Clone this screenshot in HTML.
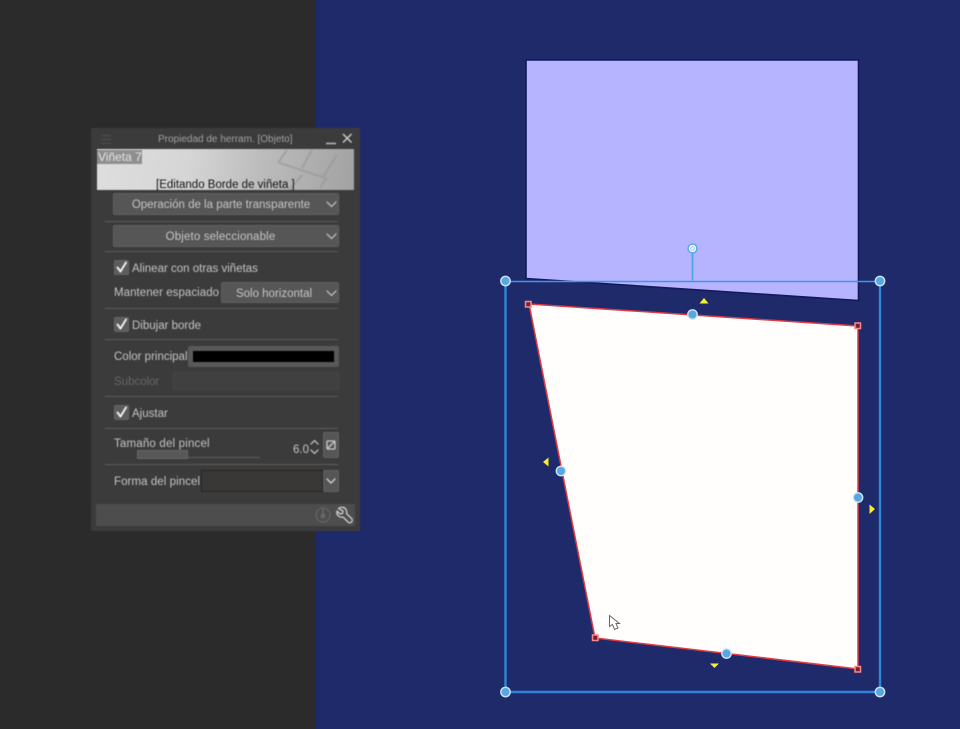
<!DOCTYPE html>
<html lang="es">
<head>
<meta charset="utf-8">
<title>Propiedad de herram.</title>
<style>
html,body{margin:0;padding:0;width:960px;height:729px;overflow:hidden;background:#2b2b2b;font-family:"Liberation Sans",sans-serif}
#bg{position:absolute;left:316px;top:0;width:644px;height:729px;background:#1f2a6b}
#canvas{position:absolute;left:0;top:0;filter:blur(.25px)}
#panel{position:absolute;left:91px;top:128px;width:269px;height:403px;background:#3c3b3c;filter:blur(.4px)}
#panel div{position:absolute;box-sizing:border-box}
.t{color:#c4c4c4;font-size:11.5px;line-height:14px;white-space:nowrap}
.btn{background:#565656;border:1px solid #606060;border-radius:2px;color:#c6c6c6;font-size:11.5px;line-height:19px;padding-top:2px;text-align:center;white-space:nowrap}
.sep{height:1px;left:14px;width:233px;background:#5c5c5c}
.cb{width:15px;height:15px;left:23px;background:#5c5c5c;border:1px solid #666;border-radius:2px}
svg{position:absolute;overflow:visible}
</style>
</head>
<body>
<div id="bg"></div>
<svg id="canvas" width="960" height="729" viewBox="0 0 960 729" style="left:0;top:0">
  <polygon points="526,60 858.500,60 858.500,300.500 526,278.500" fill="#b6b3ff" stroke="#14195a" stroke-width="1.600"/>
  <polygon points="529,304 858,326 858,669 595,638" fill="#fffefd" stroke="#e03a42" stroke-width="1.500"/>
  <line x1="505.500" y1="281.500" x2="880" y2="281.500" stroke="#3f96e6" stroke-width="1.500"/>
  <polyline points="505.500,281.500 505.500,692 880,692 880,281.500" fill="none" stroke="#2f86d8" stroke-width="2.400"/>
  <line x1="692.500" y1="250" x2="692.500" y2="281" stroke="#4fa5ea" stroke-width="1.700"/>
  <circle cx="692.500" cy="248.500" r="4.400" fill="#fff" stroke="#5aa8e6" stroke-width="1.500"/>
  <circle cx="692.500" cy="248.500" r="1.800" fill="#fff" stroke="#7ab6e8" stroke-width=".8"/>
  <g fill="#56a7e2" stroke="#cfe3f4" stroke-width="1.400">
    <circle cx="505.500" cy="281" r="4.700"/>
    <circle cx="880" cy="281" r="4.700"/>
    <circle cx="505.500" cy="692" r="4.700"/>
    <circle cx="880" cy="692" r="4.700"/>
    <circle cx="692.500" cy="314.500" r="4.700"/>
    <circle cx="561" cy="471" r="4.700"/>
    <circle cx="858" cy="497.500" r="4.700"/>
    <circle cx="726.500" cy="653.500" r="4.700"/>
  </g>
  <g fill="#7a2030" stroke="#f58a8a" stroke-width="1.500">
    <rect x="525.500" y="301.500" width="5.500" height="5.500"/>
    <rect x="855" y="323" width="5.500" height="5.500"/>
    <rect x="855" y="666.500" width="5.500" height="5.500"/>
    <rect x="592.500" y="635" width="5.500" height="5.500"/>
  </g>
  <g fill="#f6f02c">
    <polygon points="704,298 699.500,303.500 708.500,303.500"/>
    <polygon points="543,462 548.500,457.500 548.500,466.500"/>
    <polygon points="875,509 869.500,504.500 869.500,514"/>
    <polygon points="714.500,668 710,663.500 719,663.500"/>
  </g>
  <path d="M609.500 615.500 L609.500 626.500 L612.500 624.500 L614.500 629.500 L618 628 L616 623.500 L619.500 623.500 Z" fill="#fff" stroke="#666" stroke-width="1"/>
</svg>

<div id="panel">
  <svg style="left:0;top:0" width="269" height="403">
    <g stroke="#4f4f4f" stroke-width="1"><line x1="10" y1="7.500" x2="20" y2="7.500"/><line x1="10" y1="11.500" x2="20" y2="11.500"/><line x1="10" y1="15.500" x2="20" y2="15.500"/></g>
    <line x1="235" y1="15.500" x2="245" y2="15.500" stroke="#bbb" stroke-width="1.500"/>
    <path d="M252 6 L260.500 14.500 M260.500 6 L252 14.500" stroke="#c8c8c8" stroke-width="1.500" fill="none"/>
  </svg>
  <div class="t" style="left:67px;top:5px;color:#a0a0a0;font-size:10px">Propiedad de herram. [Objeto]</div>

  <div style="left:6px;top:21px;width:257px;height:41px;background:linear-gradient(100deg,#dedede 0%,#d6d6d6 35%,#bdbdbd 62%,#a2a2a2 100%);overflow:hidden">
    <svg style="left:0;top:0" width="257" height="41">
      <g stroke="#999" stroke-width="2.500" fill="none" opacity=".6">
        <path d="M181 14 L190 1"/><path d="M205 19 L215 1"/><path d="M226 28 L240 6"/>
        <path d="M183 14 L228 29"/><path d="M191 43 L205 26"/><path d="M223 39 L230 28"/>
      </g>
    </svg>
    <div class="t" style="left:0;top:1px;width:45px;height:14px;background:#8f8f8f;color:#e4e4e4;font-size:12px;line-height:14px;padding-left:1px">Viñeta 7</div>
    <div class="t" style="left:59px;top:29px;color:#111;line-height:14px">[Editando Borde de viñeta ]</div>
  </div>

  <div class="btn" style="left:22px;top:65px;width:226px;height:22px;padding-right:10px">Operación de la parte transparente</div>
  <div class="sep" style="top:93px"></div>
  <div class="btn" style="left:22px;top:97px;width:226px;height:22px;padding-right:11px;letter-spacing:.15px">Objeto seleccionable</div>
  <div class="sep" style="top:123px"></div>

  <div class="cb" style="top:132px"></div>
  <div class="t" style="left:41px;top:134px">Alinear con otras viñetas</div>
  <div class="t" style="left:23px;top:158px;letter-spacing:.05px">Mantener espaciado</div>
  <div class="btn" style="left:130px;top:154px;width:118px;height:21px;padding-right:12px">Solo horizontal</div>
  <div class="sep" style="top:180px"></div>

  <div class="cb" style="top:189px"></div>
  <div class="t" style="left:41px;top:191px">Dibujar borde</div>
  <div class="sep" style="top:211px"></div>

  <div class="t" style="left:23px;top:222px">Color principal</div>
  <div style="left:97px;top:218px;width:151px;height:21px;background:#000;border:5px solid #595959;border-radius:2px"></div>
  <div class="t" style="left:23px;top:247px;color:#666">Subcolor</div>
  <div style="left:82px;top:244px;width:166px;height:18px;background:#404040;border:1px solid #464646"></div>
  <div class="sep" style="top:268px"></div>

  <div class="cb" style="top:277px"></div>
  <div class="t" style="left:41px;top:279px">Ajustar</div>
  <div class="sep" style="top:300px"></div>

  <div class="t" style="left:23px;top:309px;letter-spacing:.18px">Tamaño del pincel</div>
  <div style="left:46px;top:322px;width:51px;height:9px;background:#585858;border:1px solid #666;border-radius:1px"></div>
  <div style="left:97px;top:329px;width:72px;height:1px;background:#5e5e5e"></div>
  <div class="t" style="left:202px;top:315px">6.0</div>
  <div class="btn" style="left:232px;top:304px;width:16px;height:26px"></div>
  <div class="sep" style="top:336px"></div>

  <div class="t" style="left:23px;top:347px;letter-spacing:.07px">Forma del pincel</div>
  <div style="left:110px;top:342px;width:122px;height:22px;background:#3a3737;border:1px solid #242424"></div>
  <div class="btn" style="left:232px;top:342px;width:16px;height:22px"></div>

  <div style="left:5px;top:376px;width:259px;height:22px;background:#4d4d4d"></div>

  <svg style="left:0;top:0" width="269" height="403">
    <g fill="none" stroke="#b8b8b8" stroke-width="1.300" stroke-linecap="round" stroke-linejoin="round">
      <path d="M236 74 L240.500 78.500 L245 74"/>
      <path d="M236 106 L240.500 110.500 L245 106"/>
      <path d="M236 163 L240.500 167.500 L245 163"/>
      <path d="M236 351 L240 355 L244 351" stroke="#d0d0d0"/>
      <path d="M220 316 L223.500 312.500 L227 316"/>
      <path d="M220 322 L223.500 325.500 L227 322"/>
      <rect x="236" y="313" width="8" height="8" rx="1" stroke="#c8c8c8"/>
      <path d="M237 320 L243 314" stroke="#c8c8c8"/>
    </g>
    <g fill="none" stroke="#efefef" stroke-width="2" stroke-linecap="round" stroke-linejoin="round">
      <path d="M26.500 139.500 L29.500 143.500 L35 134.500"/>
      <path d="M26.500 196.500 L29.500 200.500 L35 191.500"/>
      <path d="M26.500 284.500 L29.500 288.500 L35 279.500"/>
    </g>
    <g fill="none" stroke="#666" stroke-width="1.100">
      <circle cx="232" cy="387" r="7"/>
      <path d="M232 381 V388" stroke-width="1.500"/>
      <circle cx="232" cy="388" r="2" fill="#666"/>
    </g>
    <path d="M247.500 380.500 C250 378.500 253.500 379 255 381.500 C255.800 382.900 255.800 384.300 255.500 385.500 L260.500 390.500 C261.500 391.500 261.500 393 260.500 394 C259.500 395 258 395 257 394 L252 389 C250.500 389.500 248.500 389 247.300 387.800 C246 386.500 245.500 384.700 246 383 L249 386 L251.500 385.500 L252 383 Z" fill="none" stroke="#cfcfcf" stroke-width="1.300" stroke-linejoin="round"/>
  </svg>
</div>
</body>
</html>
